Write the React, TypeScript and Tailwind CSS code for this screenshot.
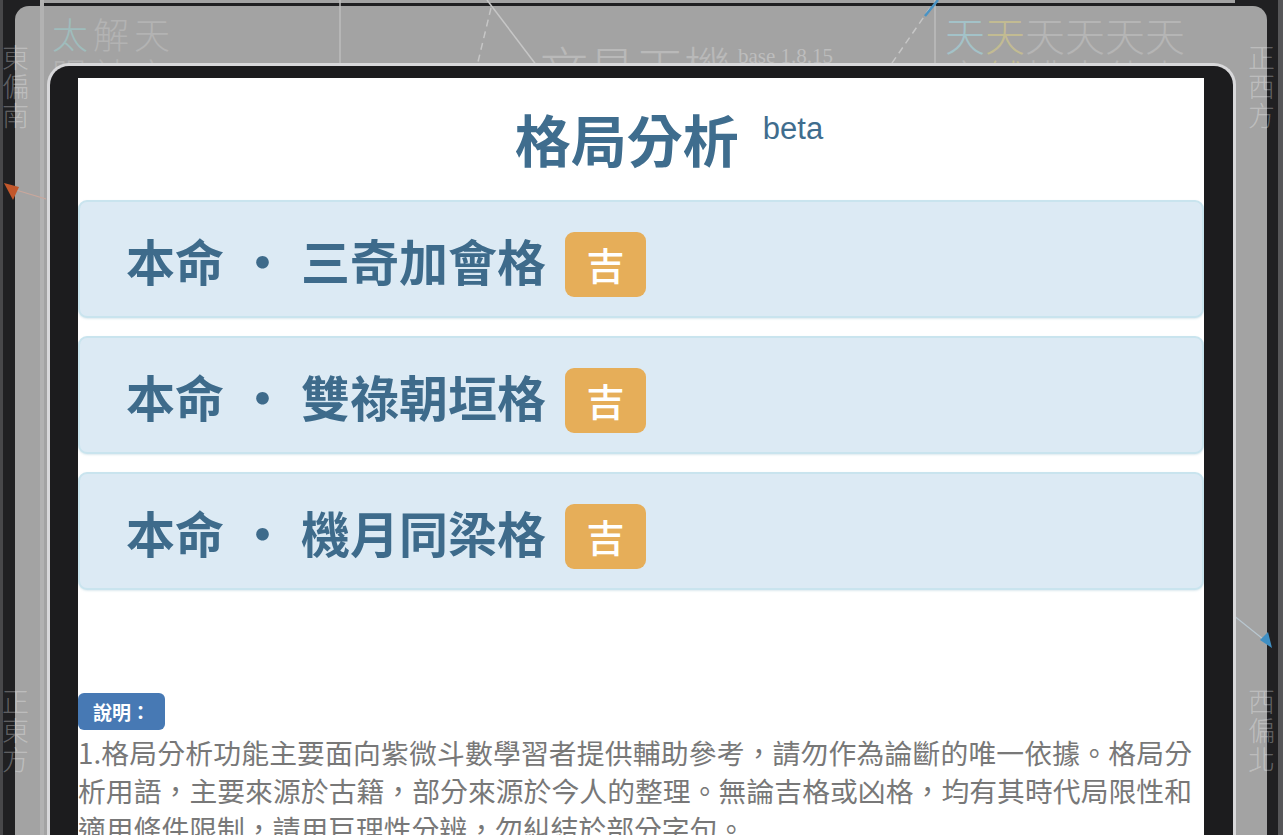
import React from "react";

const patterns = ["三奇加會格", "雙祿朝垣格", "機月同梁格"];

function PatternCard({ name }: { name: string }) {
  return (
    <div className="flex h-[118px] items-center rounded-[9px] border-2 border-[#c9e4ee] bg-[#dceaf4] pl-[46px] shadow-[0_1px_2px_rgba(120,170,190,0.25)]">
      <span className="text-[49px] font-bold leading-none text-[#3e6b8b]">本命</span>
      <span className="w-[77px] text-center text-[49px] font-bold leading-none text-[#3e6b8b]">·</span>
      <span className="text-[49px] font-bold leading-none text-[#3e6b8b]">{name}</span>
      <span className="ml-[19px] mt-[10px] flex h-[65px] w-[81px] items-center justify-center rounded-[9px] bg-[#e6ae59] text-[38px] font-medium leading-none text-white">
        吉
      </span>
    </div>
  );
}

function ChartBackdrop() {
  return (
    <>
      {/* dimmed chart behind the dialog */}
      <div className="flex h-full">
        <div className="w-[3px] bg-[#48484a]" />
        <div className="w-[12px]" />
        <div className="relative mt-[6px] flex-1 rounded-t-[14px] bg-[#a3a3a3]">
          <div className="absolute left-[37px] top-[8px] flex gap-[5px] text-[36px] font-light leading-[38px] text-[#b3b3b3]">
            <span className="text-[#9fbcbc]">太</span>
            <span>解</span>
            <span>天</span>
          </div>
          <div className="absolute left-[37px] top-[49px] flex gap-[5px] text-[36px] font-light leading-[38px] text-[#b3b3b3]">
            <span>陽</span>
            <span>神</span>
            <span>空</span>
          </div>
          <div className="absolute left-[525px] top-[32px] text-[48px] font-light leading-[56px] text-[#b9b9b9]">
            文昌天機
          </div>
          <div className="absolute left-[723px] top-[38px] font-['Liberation_Serif',serif] text-[21px] leading-[24px] text-[#bdbdbd]">
            base 1.8.15
          </div>
          <div className="absolute left-[930px] top-[8px] flex text-[40px] font-light leading-[40px] text-[#b5b5b5]">
            <span className="text-[#a3c2c8]">天</span>
            <span className="text-[#c2bb92]">天</span>
            <span>天</span>
            <span>天</span>
            <span>天</span>
            <span>天</span>
          </div>
          <div className="absolute left-[930px] top-[51px] flex text-[40px] font-light leading-[40px] text-[#b5b5b5]">
            <span>空</span>
            <span className="text-[#c2bb92]">鉞</span>
            <span>桃</span>
            <span>喜</span>
            <span>使</span>
            <span>虛</span>
          </div>
        </div>
        <div className="w-[11px]" />
        <div className="w-[5px] bg-[#565658]" />
      </div>
      <div className="absolute left-[40px] top-0 h-[3px] w-[1195px] bg-[#a3a3a3]" />

      <div className="absolute left-[2px] top-[42px] w-[28px] text-[27px] font-light leading-[29px] text-white/30">東偏南</div>
      <div className="absolute left-[1248px] top-[42px] w-[28px] text-[27px] font-light leading-[29px] text-white/30">正西方</div>
      <div className="absolute left-[2px] top-[686px] w-[28px] text-[27px] font-light leading-[29px] text-white/30">正東方</div>
      <div className="absolute left-[1248px] top-[686px] w-[28px] text-[27px] font-light leading-[29px] text-white/30">西偏北</div>

      <svg className="absolute inset-0" width="1283" height="835" viewBox="0 0 1283 835">
        <line x1="42" y1="0" x2="42" y2="835" stroke="#b2b2b2" strokeWidth="4" />
        <line x1="340" y1="0" x2="340" y2="70" stroke="#bcbcbc" strokeWidth="1.5" />
        <line x1="935" y1="0" x2="935" y2="70" stroke="#bcbcbc" strokeWidth="1.5" />
        <line x1="487" y1="0" x2="537" y2="66" stroke="#c6c6c6" strokeWidth="1.5" />
        <line x1="491" y1="8" x2="477" y2="66" stroke="#c6c6c6" strokeWidth="1.5" strokeDasharray="7 5" />
        <line x1="930" y1="8" x2="890" y2="66" stroke="#c6c6c6" strokeWidth="1.5" strokeDasharray="7 5" />
        <line x1="925" y1="16" x2="938" y2="0" stroke="#4a93c4" strokeWidth="2.5" />
        <line x1="16" y1="190" x2="46" y2="199" stroke="#c9a79c" strokeWidth="1.2" />
        <polygon points="4,183 19,187 13,200" fill="#c2572b" />
        <line x1="1233" y1="615" x2="1268" y2="643" stroke="#b9c7d0" strokeWidth="1.2" />
        <polygon points="1272,648 1260,640 1268,632" fill="#3f8fc4" />
      </svg>
    </>
  );
}

export default function App() {
  return (
    <div className="relative h-[835px] w-full overflow-hidden bg-[#202022] font-['Noto_Sans_CJK_TC','Noto_Sans',sans-serif]">
      <ChartBackdrop />

      {/* dialog */}
      <div className="absolute left-[47px] top-[63px] h-[800px] w-[1189px] rounded-t-[22px] border-[3px] border-b-0 border-[#d8d8da] bg-[#1c1c1e] pl-[28px] pr-[29px] pt-[12px]">
        <div className="h-full overflow-hidden bg-white">
          <div className="flex items-start justify-center pl-[56px] pt-[26px]">
            <h1 className="text-[56px] font-bold leading-[68px] text-[#3f6d8e]">格局分析</h1>
            <span className="ml-[24px] mt-[9px] font-['Liberation_Sans',sans-serif] text-[31px] leading-[31px] text-[#3f6d8e]">
              beta
            </span>
          </div>

          <div className="mt-[28px] flex flex-col gap-[18px]">
            {patterns.map((p) => (
              <PatternCard key={p} name={p} />
            ))}
          </div>

          <div className="mt-[103px] pr-[12px]">
            <span className="inline-block h-[37px] rounded-[6px] bg-[#4779b4] px-[15px] text-[19px] font-bold leading-[37px] text-white">
              說明：
            </span>
            <p className="pt-[3px] text-justify text-[27.8px] leading-[38px] text-[#787878]">
              <span className="block [text-align-last:justify]">
                1.格局分析功能主要面向紫微斗數學習者提供輔助參考，請勿作為論斷的唯一依據。格局分
              </span>
              析用語，主要來源於古籍，部分來源於今人的整理。無論吉格或凶格，均有其時代局限性和適用條件限制，請用巨理性分辨，勿糾結於部分字句。
            </p>
          </div>
        </div>
      </div>
    </div>
  );
}
